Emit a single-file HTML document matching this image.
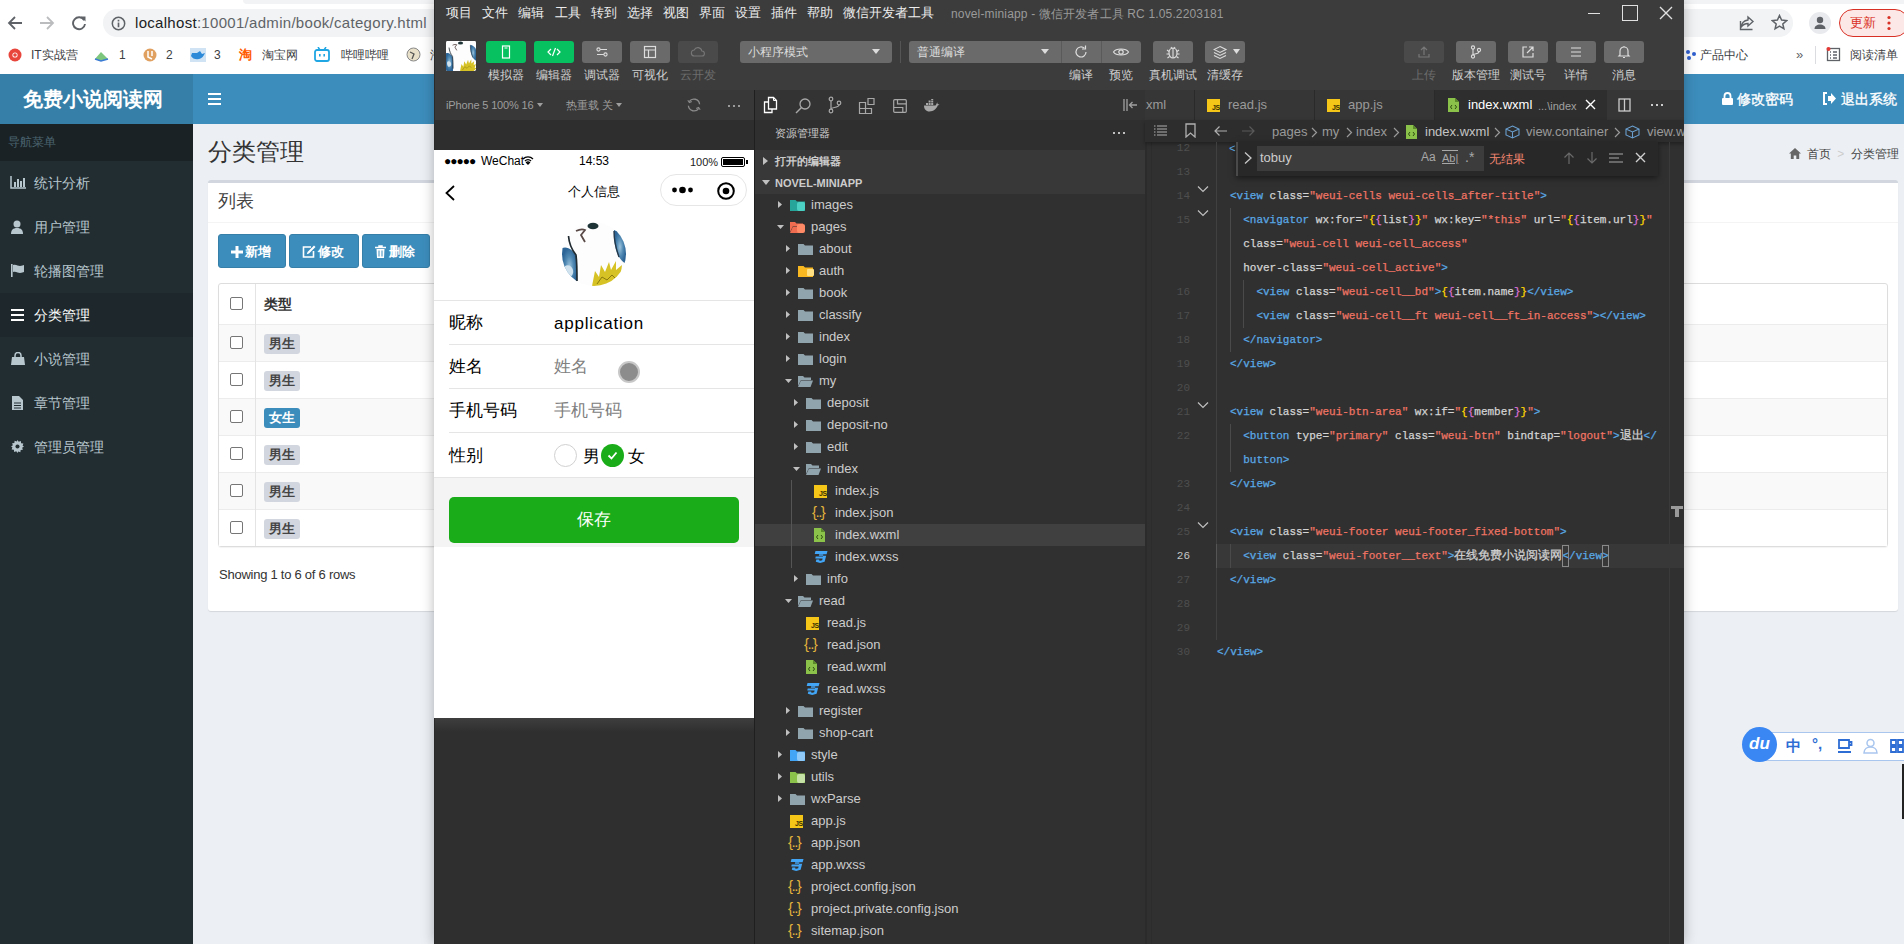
<!DOCTYPE html>
<html><head><meta charset="utf-8">
<style>
*{box-sizing:border-box;margin:0;padding:0}
html,body{width:1904px;height:944px;overflow:hidden;background:#ecf0f5;font-family:"Liberation Sans",sans-serif;position:relative}
.a{position:absolute;white-space:nowrap}
/* browser chrome */
#chrome{left:0;top:0;width:1904px;height:74px;background:#fff}
#hdr{left:0;top:74px;width:1904px;height:50px;background:#3c8dbc}
#logo{left:0;top:74px;width:193px;height:50px;background:#367fa9;color:#fff;font-weight:bold;font-size:20px;line-height:50px;padding-left:23px}
#side{left:0;top:124px;width:193px;height:820px;background:#222d32}
.mi{left:0;width:193px;height:44px;line-height:44px;color:#b8c7ce;font-size:14px;padding-left:34px}
.mi svg{position:absolute;left:10px;top:15px}
.box{background:#fff}
.btn{background:#3c8dbc;border:1px solid #367fa9;border-radius:3px;color:#fff;font-size:13px;height:34px;line-height:33px;text-align:center;font-weight:bold}
.cb{width:13px;height:13px;border:1px solid #767676;border-radius:2px;background:#fff}
.lbl{width:36px;height:20px;border-radius:3px;background:#d2d6de;color:#444;font-size:13px;font-weight:bold;line-height:20px;text-align:center}
/* devtools */
#dt{left:434px;top:0;width:1250px;height:944px;background:#3c3c3c;overflow:hidden;box-shadow:0 0 12px rgba(0,0,0,.28)}
.mm{top:4px;font-size:13px;color:#e8e8e8;line-height:18px}
.tb{top:41px;width:40px;height:22px;border-radius:3px;background:#6a6a6a}
.tl{top:67px;font-size:12px;color:#d6d6d6;line-height:16px;text-align:center}
.tr{height:22px;line-height:22px;font-size:13px;color:#cccccc}
.code{font-family:"Liberation Mono",monospace;font-size:11px;line-height:24px;color:#d4d4d4;-webkit-text-stroke:.25px}
.t{color:#5aa9e6}.s{color:#f07464}.y{color:#ffd700}.p{color:#da70d6}
</style></head><body>

<!-- ===== Browser chrome ===== -->
<div class="a" id="chrome"></div>
<div class="a" style="left:243px;top:0;width:1661px;height:4px;background:#f1f3f4;border-radius:0 0 0 4px"></div>
<div class="a" style="left:103px;top:9px;width:1690px;height:28px;border-radius:14px;background:#f1f3f4"></div>
<!-- nav icons -->
<svg class="a" style="left:7px;top:15px" width="16" height="16" viewBox="0 0 16 16"><path d="M15 8H2.5M8 2L2 8l6 6" stroke="#5f6368" stroke-width="1.8" fill="none"/></svg>
<svg class="a" style="left:39px;top:15px" width="16" height="16" viewBox="0 0 16 16"><path d="M1 8h12.5M8 2l6 6-6 6" stroke="#babcbe" stroke-width="1.8" fill="none"/></svg>
<svg class="a" style="left:71px;top:15px" width="16" height="16" viewBox="0 0 16 16"><path d="M13.2 5.2A6 6 0 1 0 14 9" stroke="#5f6368" stroke-width="1.9" fill="none"/><path d="M9.5 1.5h5v5z" fill="#5f6368"/></svg>
<svg class="a" style="left:111px;top:16px" width="15" height="15" viewBox="0 0 16 16"><circle cx="8" cy="8" r="6.6" stroke="#5f6368" stroke-width="1.6" fill="none"/><rect x="7.1" y="7" width="1.8" height="5" fill="#5f6368"/><rect x="7.1" y="4" width="1.8" height="1.8" fill="#5f6368"/></svg>
<div class="a" style="left:135px;top:13px;font-size:15px;line-height:20px;color:#5f6368;letter-spacing:.3px"><span style="color:#202124">localhost</span>:10001/admin/book/category.html</div>
<!-- bookmarks -->
<div class="a" style="left:0;top:45px;width:440px;height:20px;font-size:12px;line-height:20px;color:#3c4043">
 <svg class="a" style="left:8px;top:3px" width="14" height="14" viewBox="0 0 14 14"><circle cx="7" cy="7" r="6.5" fill="#e8453c"/><circle cx="7" cy="7" r="2.6" fill="#fff"/><circle cx="7" cy="7" r="1.8" fill="#e8453c"/></svg>
 <span class="a" style="left:31px">IT实战营</span>
 <svg class="a" style="left:94px;top:4px" width="15" height="13" viewBox="0 0 15 13"><path d="M1 10l6-7 7 7-7 2z" fill="#5cb85c" opacity=".8"/><path d="M1 10l6 2 7-2" stroke="#3b7bd4" stroke-width="1.6" fill="none"/></svg>
 <span class="a" style="left:119px">1</span>
 <svg class="a" style="left:143px;top:3px" width="14" height="14" viewBox="0 0 14 14"><circle cx="7" cy="7" r="6.5" fill="#e0a060"/><path d="M5 3v6l4 2M9 3v5" stroke="#fff" stroke-width="1.5" fill="none"/></svg>
 <span class="a" style="left:166px">2</span>
 <svg class="a" style="left:190px;top:3px" width="16" height="14" viewBox="0 0 16 14"><rect width="16" height="14" fill="#cfe3f5"/><path d="M1 8c2 4 10 5 13-1l1-2-3 1-2-3-3 2H2z" fill="#2d8ad8"/></svg>
 <span class="a" style="left:214px">3</span>
 <span class="a" style="left:239px;color:#ff5b00;font-weight:bold;font-size:13px">淘</span>
 <span class="a" style="left:262px">淘宝网</span>
 <svg class="a" style="left:314px;top:2px" width="16" height="15" viewBox="0 0 16 15"><rect x="1" y="3" width="14" height="11" rx="2" stroke="#20a6e3" stroke-width="1.8" fill="none"/><path d="M4 0l2 3M12 0l-2 3" stroke="#20a6e3" stroke-width="1.5"/><rect x="5" y="7" width="1.6" height="2.5" fill="#20a6e3"/><rect x="9.4" y="7" width="1.6" height="2.5" fill="#20a6e3"/></svg>
 <span class="a" style="left:341px">哔哩哔哩</span>
 <svg class="a" style="left:406px;top:2px" width="15" height="15" viewBox="0 0 15 15"><circle cx="7.5" cy="7.5" r="6.5" fill="#e8e0c8" stroke="#888" stroke-width="1"/><path d="M4 5l4 2-2 5" stroke="#555" stroke-width="1.3" fill="none"/></svg>
 <span class="a" style="left:430px">淘</span>
</div>
<!-- right side chrome -->
<svg class="a" style="left:1739px;top:15px" width="16" height="16" viewBox="0 0 16 16"><path d="M9 2l5 4.5L9 11V8.5C5.5 8.5 3.5 10 2 12.5 2.5 8.5 5 5.5 9 5z" stroke="#5f6368" stroke-width="1.4" fill="none"/><path d="M1.5 6v8.5h12" stroke="#5f6368" stroke-width="1.4" fill="none"/></svg>
<svg class="a" style="left:1771px;top:14px" width="17" height="17" viewBox="0 0 17 17"><path d="M8.5 1.5l2.1 4.6 5 .5-3.8 3.3 1.1 4.9-4.4-2.6-4.4 2.6 1.1-4.9L1.4 6.6l5-.5z" stroke="#5f6368" stroke-width="1.5" fill="none"/></svg>
<div class="a" style="left:1809px;top:12px;width:22px;height:22px;border-radius:11px;background:#e8eaed"></div>
<svg class="a" style="left:1812px;top:15px" width="16" height="16" viewBox="0 0 16 16"><circle cx="8" cy="5" r="3.2" fill="#5f6368"/><path d="M2.5 14c0-3 2.5-4.5 5.5-4.5s5.5 1.5 5.5 4.5z" fill="#5f6368"/></svg>
<div class="a" style="left:1839px;top:9px;width:70px;height:28px;border-radius:14px;border:1px solid #d93025;background:#fce8e6"></div>
<div class="a" style="left:1850px;top:14px;font-size:13px;line-height:18px;color:#d93025">更新</div>
<svg class="a" style="left:1887px;top:15px" width="4" height="16" viewBox="0 0 4 16"><circle cx="2" cy="2.5" r="1.6" fill="#d93025"/><circle cx="2" cy="8" r="1.6" fill="#d93025"/><circle cx="2" cy="13.5" r="1.6" fill="#d93025"/></svg>
<svg class="a" style="left:1684px;top:48px" width="14" height="14" viewBox="0 0 14 14"><circle cx="4" cy="4" r="2" fill="#3060d0"/><circle cx="10" cy="6" r="2" fill="#3060d0"/><circle cx="5" cy="10" r="2" fill="#3060d0"/></svg>
<div class="a" style="left:1700px;top:45px;font-size:12px;line-height:20px;color:#3c4043">产品中心</div>
<div class="a" style="left:1796px;top:45px;font-size:13px;line-height:20px;color:#5f6368">»</div>
<div class="a" style="left:1815px;top:46px;width:1px;height:18px;background:#dadce0"></div>
<svg class="a" style="left:1826px;top:47px" width="15" height="15" viewBox="0 0 15 15"><rect x="1.5" y="1.5" width="12" height="12" stroke="#5f6368" stroke-width="1.3" fill="none"/><path d="M4 5h1M4 8h1M4 11h1M7 5h4M7 8h4M7 11h4" stroke="#5f6368" stroke-width="1.3"/><circle cx="2.5" cy="2" r="2" fill="#e53935"/></svg>
<div class="a" style="left:1850px;top:45px;font-size:12px;line-height:20px;color:#3c4043">阅读清单</div>

<!-- ===== Admin page ===== -->
<div class="a" id="hdr"></div>
<div class="a" id="logo">免费小说阅读网</div>
<svg class="a" style="left:208px;top:93px" width="13" height="12" viewBox="0 0 13 12"><rect y="0" width="13" height="2" fill="#fff"/><rect y="5" width="13" height="2" fill="#fff"/><rect y="10" width="13" height="2" fill="#fff"/></svg>
<div class="a" id="side"></div>
<div class="a" style="left:0;top:124px;width:193px;height:37px;background:#1a2226;color:#4b646f;font-size:12px;line-height:37px;padding-left:8px">导航菜单</div>
<div class="a mi" style="top:161px">统计分析<svg width="16" height="13" viewBox="0 0 16 13" style="top:15px"><path d="M1 0v12h15" stroke="#b8c7ce" stroke-width="1.5" fill="none"/><rect x="4" y="6" width="2" height="5" fill="#b8c7ce"/><rect x="7" y="3" width="2" height="8" fill="#b8c7ce"/><rect x="10" y="5" width="2" height="6" fill="#b8c7ce"/><rect x="13" y="2" width="2" height="9" fill="#b8c7ce"/></svg></div>
<div class="a mi" style="top:205px">用户管理<svg width="12" height="14" viewBox="0 0 12 14" style="left:11px"><circle cx="6" cy="4" r="3.5" fill="#b8c7ce"/><path d="M0 14c0-4 2-6 6-6s6 2 6 6z" fill="#b8c7ce"/></svg></div>
<div class="a mi" style="top:249px">轮播图管理<svg width="14" height="13" viewBox="0 0 14 13" style="left:11px"><rect x="0" y="0" width="1.6" height="13" fill="#b8c7ce"/><path d="M2 1c3-1 5 1 7 1s3-1 4-1v7c-1 0-2 1-4 1S5 7 2 8z" fill="#b8c7ce"/></svg></div>
<div class="a mi" style="top:293px;background:#1e282c;color:#fff;border-left:0">分类管理<svg width="13" height="12" viewBox="0 0 13 12" style="top:16px;left:11px"><rect y="0" width="13" height="2" fill="#fff"/><rect y="5" width="13" height="2" fill="#fff"/><rect y="10" width="13" height="2" fill="#fff"/></svg></div>
<div class="a mi" style="top:337px">小说管理<svg width="14" height="13" viewBox="0 0 14 13" style="left:11px"><path d="M4 5V3.5a3 3 0 0 1 6 0V5" stroke="#b8c7ce" stroke-width="1.5" fill="none"/><path d="M1 5h12l1 8H0z" fill="#b8c7ce"/></svg></div>
<div class="a mi" style="top:381px">章节管理<svg width="11" height="14" viewBox="0 0 11 14" style="left:12px"><path d="M0 0h7l4 4v10H0z" fill="#b8c7ce"/><path d="M2 7h7M2 9.5h7M2 12h7" stroke="#222d32" stroke-width="1"/></svg></div>
<div class="a mi" style="top:425px">管理员管理<svg width="13" height="13" viewBox="0 0 14 14" style="left:11px"><path d="M7 0l1.3 2 2.3-.8.3 2.4 2.4.3-.8 2.3L14 7l-2 1.3.8 2.3-2.4.3-.3 2.4-2.3-.8L7 14l-1.3-2-2.3.8-.3-2.4-2.4-.3.8-2.3L0 7l2-1.3-.8-2.3 2.4-.3.3-2.4 2.3.8z" fill="#b8c7ce"/><circle cx="7" cy="7" r="2.2" fill="#222d32"/></svg></div>

<div class="a" style="left:208px;top:137px;font-size:24px;line-height:30px;color:#333">分类管理</div>
<!-- breadcrumb -->
<svg class="a" style="left:1789px;top:148px" width="12" height="11" viewBox="0 0 12 11"><path d="M6 0l6 5.5h-1.8V11H7.3V7.5H4.7V11H1.8V5.5H0z" fill="#666"/></svg>
<div class="a" style="left:1807px;top:146px;font-size:12px;line-height:16px;color:#444">首页 <span style="color:#ccc;padding:0 3px">&gt;</span> 分类管理</div>
<div class="a" style="left:1722px;top:91px;font-size:13.5px;line-height:18px;color:#fff;-webkit-text-stroke:.35px #fff">
 <svg style="vertical-align:-1px;margin-right:4px" width="11" height="13" viewBox="0 0 11 13"><path d="M2.5 6V4a3 3 0 0 1 6 0v2" stroke="#fff" stroke-width="1.8" fill="none"/><rect x="0" y="6" width="11" height="7" rx="1" fill="#fff"/></svg>修改密码
</div>
<div class="a" style="left:1822px;top:91px;font-size:13.5px;line-height:18px;color:#fff;-webkit-text-stroke:.35px #fff">
 <svg style="vertical-align:-1px;margin-right:5px" width="14" height="13" viewBox="0 0 14 13"><path d="M5 1H2v11h3" stroke="#fff" stroke-width="2" fill="none"/><path d="M6 4h3V1l5 5.5-5 5.5V9H6z" fill="#fff"/></svg>退出系统
</div>

<!-- box -->
<div class="a box" style="left:208px;top:180px;width:1690px;height:431px;border-top:3px solid #d2d6de;border-radius:3px;box-shadow:0 1px 1px rgba(0,0,0,.1)"></div>
<div class="a" style="left:208px;top:222px;width:1690px;height:1px;background:#f4f4f4"></div>
<div class="a" style="left:218px;top:190px;font-size:18px;line-height:22px;color:#444">列表</div>
<div class="a btn" style="left:218px;top:234px;width:68px;padding-left:12px">新增<svg class="a" style="left:12px;top:11px" width="12" height="12" viewBox="0 0 12 12"><path d="M6 0v12M0 6h12" stroke="#fff" stroke-width="3"/></svg></div>
<div class="a btn" style="left:289px;top:234px;width:70px;padding-left:14px">修改<svg class="a" style="left:12px;top:10px" width="14" height="13" viewBox="0 0 14 13"><path d="M9 2H1.5v10h10V6" stroke="#fff" stroke-width="1.6" fill="none"/><path d="M12 0.5l1.5 1.5-6.5 6.5-2.2.7.7-2.2z" fill="#fff"/></svg></div>
<div class="a btn" style="left:362px;top:234px;width:68px;padding-left:12px">删除<svg class="a" style="left:12px;top:10px" width="11" height="13" viewBox="0 0 11 13"><path d="M0 2.5h11M4 2.5V1h3v1.5" stroke="#fff" stroke-width="1.5" fill="none"/><path d="M1.5 4h8l-.5 9H2z" fill="#fff"/><path d="M4 5.5v6M7 5.5v6" stroke="#3c8dbc" stroke-width="1"/></svg></div>
<!-- table -->
<div class="a" style="left:218px;top:283px;width:1670px;height:264px;border:1px solid #ddd;border-radius:3px;box-shadow:0 1px 1px rgba(0,0,0,.05)"></div>
<div class="a" style="left:219px;top:324px;width:1668px;height:37px;background:#f9f9f9;border-top:1px solid #ececec"></div>
<div class="a cb" style="left:230px;top:336px"></div>
<div class="a lbl" style="left:264px;top:334px;">男生</div>
<div class="a" style="left:219px;top:361px;width:1668px;height:37px;background:#fff;border-top:1px solid #ececec"></div>
<div class="a cb" style="left:230px;top:373px"></div>
<div class="a lbl" style="left:264px;top:371px;">男生</div>
<div class="a" style="left:219px;top:398px;width:1668px;height:37px;background:#f9f9f9;border-top:1px solid #ececec"></div>
<div class="a cb" style="left:230px;top:410px"></div>
<div class="a lbl" style="left:264px;top:408px;background:#3c8dbc;color:#fff">女生</div>
<div class="a" style="left:219px;top:435px;width:1668px;height:37px;background:#fff;border-top:1px solid #ececec"></div>
<div class="a cb" style="left:230px;top:447px"></div>
<div class="a lbl" style="left:264px;top:445px;">男生</div>
<div class="a" style="left:219px;top:472px;width:1668px;height:37px;background:#f9f9f9;border-top:1px solid #ececec"></div>
<div class="a cb" style="left:230px;top:484px"></div>
<div class="a lbl" style="left:264px;top:482px;">男生</div>
<div class="a" style="left:219px;top:509px;width:1668px;height:37px;background:#fff;border-top:1px solid #ececec"></div>
<div class="a cb" style="left:230px;top:521px"></div>
<div class="a lbl" style="left:264px;top:519px;">男生</div>
<div class="a cb" style="left:230px;top:297px"></div>
<div class="a" style="left:264px;top:295px;font-size:14px;line-height:18px;font-weight:bold;color:#333">类型</div>
<div class="a" style="left:255px;top:284px;width:1px;height:262px;background:#e4e4e4"></div>
<div class="a" style="left:219px;top:567px;font-size:13px;line-height:16px;color:#333;letter-spacing:-.25px">Showing 1 to 6 of 6 rows</div>

<!-- IME -->
<div class="a" style="left:1760px;top:732px;width:150px;height:29px;background:#fff;border:1px solid #a9c6ee;border-radius:3px"></div>
<div class="a" style="left:1742px;top:727px;width:35px;height:35px;border-radius:50%;background:#3a86f2;color:#fff;font-size:17px;line-height:34px;text-align:center;font-style:italic;font-weight:bold">du</div>
<div class="a" style="left:1786px;top:736px;font-size:15px;line-height:20px;color:#2e6ed4;font-weight:bold">中</div>
<div class="a" style="left:1812px;top:734px;font-size:15px;line-height:20px;color:#2e6ed4;font-weight:bold">°,</div>
<svg class="a" style="left:1837px;top:738px" width="16" height="16" viewBox="0 0 16 16"><path d="M2 2h10v8H2zM12 4h2.5v3H12M1 14h13" stroke="#2e6ed4" stroke-width="1.8" fill="none"/></svg>
<svg class="a" style="left:1863px;top:738px" width="15" height="16" viewBox="0 0 15 16"><circle cx="7.5" cy="5" r="3.5" stroke="#a9c6ee" stroke-width="1.5" fill="none"/><path d="M1 15c0-4 3-6 6.5-6s6.5 2 6.5 6z" stroke="#a9c6ee" stroke-width="1.5" fill="none"/></svg>
<svg class="a" style="left:1890px;top:739px" width="14" height="15" viewBox="0 0 14 15"><path d="M1 1h5v5H1zM8 1h5v5H8zM1 8h5v5H1zM8 8h5v5H8z" stroke="#2e6ed4" stroke-width="1.8" fill="none"/></svg>
<div class="a" style="left:1902px;top:764px;width:2px;height:55px;background:#222"></div>

<!-- ===== DevTools window ===== -->
<div class="a" id="dt">
<div class="a" style="left:12px;top:4px;font-size:13px;line-height:18px;color:#ececec">项目</div>
<div class="a" style="left:48px;top:4px;font-size:13px;line-height:18px;color:#ececec">文件</div>
<div class="a" style="left:84px;top:4px;font-size:13px;line-height:18px;color:#ececec">编辑</div>
<div class="a" style="left:121px;top:4px;font-size:13px;line-height:18px;color:#ececec">工具</div>
<div class="a" style="left:157px;top:4px;font-size:13px;line-height:18px;color:#ececec">转到</div>
<div class="a" style="left:193px;top:4px;font-size:13px;line-height:18px;color:#ececec">选择</div>
<div class="a" style="left:229px;top:4px;font-size:13px;line-height:18px;color:#ececec">视图</div>
<div class="a" style="left:265px;top:4px;font-size:13px;line-height:18px;color:#ececec">界面</div>
<div class="a" style="left:301px;top:4px;font-size:13px;line-height:18px;color:#ececec">设置</div>
<div class="a" style="left:337px;top:4px;font-size:13px;line-height:18px;color:#ececec">插件</div>
<div class="a" style="left:373px;top:4px;font-size:13px;line-height:18px;color:#ececec">帮助</div>
<div class="a" style="left:409px;top:4px;font-size:13px;line-height:18px;color:#ececec">微信开发者工具</div>
<div class="a" style="left:517px;top:5px;font-size:12px;line-height:18px;color:#9a9a9a;letter-spacing:.15px">novel-miniapp - 微信开发者工具 RC 1.05.2203181</div>
<div class="a" style="left:1154px;top:13px;width:12px;height:1px;background:#e0e0e0"></div>
<div class="a" style="left:1188px;top:5px;width:16px;height:16px;border:1.5px solid #e0e0e0"></div>
<svg class="a" style="left:1225px;top:6px;" width="14" height="14" viewBox="0 0 14 14"><path d="M1 1l12 12M13 1L1 13" stroke="#e0e0e0" stroke-width="1.4"/></svg>
<svg class="a" style="left:12px;top:41px;" width="30" height="30" viewBox="0 0 64 64"><defs><clipPath id="avc1"><rect width="64" height="64" rx="3"/></clipPath><radialGradient id="avg1" cx=".5" cy=".5" r=".5"><stop offset="0" stop-color="#9cc3dc"/><stop offset=".55" stop-color="#4f88b2"/><stop offset="1" stop-color="#2c6596"/></radialGradient></defs><g clip-path="url(#avc1)"><rect width="64" height="64" fill="#fdfdfd"/><path d="M0 26c6-2 11 2 14 8 1 6 1 14 1 30H0z" fill="url(#avg1)"/><path d="M3 44c3-2 7 0 8 4s-2 8-5 7-5-7-3-11z" fill="#cfe2ee"/><path d="M52 8c6 2 11 6 12 10v24c-3-2-5-4-7-7-4-7-5-15-5-27z" fill="url(#avg1)"/><path d="M6.5 14C7 21 10 28 14 33c1 8 1 18 1 26" stroke="#1f2a30" stroke-width="1.7" fill="none"/><path d="M52 9c0 8 1 15 5 26" stroke="#24384a" stroke-width="1.4" fill="none"/><path d="M14 9c4-2 7-2 9-1l-4 5 4 7" stroke="#5a4a48" stroke-width="1.8" fill="none"/><ellipse cx="31" cy="4" rx="5.5" ry="3.2" fill="#1d3336"/><path d="M30 64l3-15 4 6 2-12 4 7 4-10 2 8 5-9v9l6-5-1 8 5-2-3 8 4 1-6 6z" fill="#d6c224"/><path d="M35 62l5-7 5 3 5-5 4 4" stroke="#8a7a10" stroke-width="1" fill="none"/></g></svg>
<div class="a" style="left:52px;top:41px;width:40px;height:22px;border-radius:3px;background:#07c160"></div>
<svg class="a" style="left:64px;top:44px;" width="16" height="16" viewBox="0 0 16 16"><rect x="4.5" y="2" width="7" height="12" stroke="#fff" stroke-width="1.2" fill="none"/><path d="M6.5 4h3" stroke="#fff" stroke-width="1"/></svg>
<div class="a" style="left:42px;top:67px;width:60px;height:16px;font-size:12px;line-height:16px;color:#d0d0d0;text-align:center">模拟器</div>
<div class="a" style="left:100px;top:41px;width:40px;height:22px;border-radius:3px;background:#07c160"></div>
<svg class="a" style="left:112px;top:44px;" width="16" height="16" viewBox="0 0 16 16"><path d="M5 5L2 8l3 3M11 5l3 3-3 3M9.5 4l-3 8" stroke="#fff" stroke-width="1.2" fill="none"/></svg>
<div class="a" style="left:90px;top:67px;width:60px;height:16px;font-size:12px;line-height:16px;color:#d0d0d0;text-align:center">编辑器</div>
<div class="a" style="left:148px;top:41px;width:40px;height:22px;border-radius:3px;background:#6a6a6a"></div>
<svg class="a" style="left:160px;top:44px;" width="16" height="16" viewBox="0 0 16 16"><path d="M6 5.5h7M3 10.5h7" stroke="#ddd" stroke-width="1.2"/><circle cx="4.5" cy="5.5" r="1.6" stroke="#ddd" stroke-width="1.1" fill="#6a6a6a"/><circle cx="11.5" cy="10.5" r="1.6" stroke="#ddd" stroke-width="1.1" fill="#6a6a6a"/></svg>
<div class="a" style="left:138px;top:67px;width:60px;height:16px;font-size:12px;line-height:16px;color:#d0d0d0;text-align:center">调试器</div>
<div class="a" style="left:196px;top:41px;width:40px;height:22px;border-radius:3px;background:#6a6a6a"></div>
<svg class="a" style="left:208px;top:44px;" width="16" height="16" viewBox="0 0 16 16"><rect x="2.5" y="2.5" width="11" height="11" stroke="#ddd" stroke-width="1.2" fill="none"/><path d="M2.5 6h11M6.5 6v7.5" stroke="#ddd" stroke-width="1.2"/></svg>
<div class="a" style="left:186px;top:67px;width:60px;height:16px;font-size:12px;line-height:16px;color:#d0d0d0;text-align:center">可视化</div>
<div class="a" style="left:244px;top:41px;width:40px;height:22px;border-radius:3px;background:#4a4a4a"></div>
<svg class="a" style="left:256px;top:44px;" width="16" height="16" viewBox="0 0 16 16"><path d="M4.5 12a3 3 0 0 1-.3-6 4 4 0 0 1 7.6 1 2.5 2.5 0 0 1 .2 5z" stroke="#777" stroke-width="1.1" fill="none"/></svg>
<div class="a" style="left:234px;top:67px;width:60px;height:16px;font-size:12px;line-height:16px;color:#6c6c6c;text-align:center">云开发</div>
<div class="a" style="left:306px;top:41px;width:152px;height:22px;border-radius:3px;background:#6a6a6a"></div>
<div class="a" style="left:314px;top:44px;font-size:12px;line-height:16px;color:#dcdcdc">小程序模式</div>
<svg class="a" style="left:438px;top:49px;" width="8" height="5" viewBox="0 0 8 5"><path d="M0 0h8L4 5z" fill="#dcdcdc"/></svg>
<div class="a" style="left:466px;top:41px;width:1px;height:22px;background:#555"></div>
<div class="a" style="left:475px;top:41px;width:232px;height:22px;border-radius:3px;background:#6a6a6a"></div>
<div class="a" style="left:627px;top:41px;width:1px;height:22px;background:#5a5a5a"></div>
<div class="a" style="left:667px;top:41px;width:1px;height:22px;background:#5a5a5a"></div>
<div class="a" style="left:483px;top:44px;font-size:12px;line-height:16px;color:#dcdcdc">普通编译</div>
<svg class="a" style="left:607px;top:49px;" width="8" height="5" viewBox="0 0 8 5"><path d="M0 0h8L4 5z" fill="#dcdcdc"/></svg>
<svg class="a" style="left:639px;top:44px;" width="16" height="16" viewBox="0 0 16 16"><path d="M13 8a5 5 0 1 1-1.6-3.7" stroke="#ddd" stroke-width="1.2" fill="none"/><path d="M12.5 1.5v3.5H9" stroke="#ddd" stroke-width="1.2" fill="none"/></svg>
<svg class="a" style="left:678px;top:44px;" width="18" height="16" viewBox="0 0 18 16"><path d="M1.5 8C4 4 14 4 16.5 8 14 12 4 12 1.5 8z" stroke="#ddd" stroke-width="1.2" fill="none"/><circle cx="9" cy="8" r="2.2" stroke="#ddd" stroke-width="1.2" fill="none"/></svg>
<div class="a" style="left:627px;top:67px;width:40px;height:16px;font-size:12px;line-height:16px;color:#d0d0d0;text-align:center">编译</div>
<div class="a" style="left:667px;top:67px;width:40px;height:16px;font-size:12px;line-height:16px;color:#d0d0d0;text-align:center">预览</div>
<div class="a" style="left:719px;top:41px;width:40px;height:22px;border-radius:3px;background:#6a6a6a"></div>
<svg class="a" style="left:731px;top:44px;" width="16" height="16" viewBox="0 0 16 16"><ellipse cx="8" cy="9" rx="4" ry="5" stroke="#ddd" stroke-width="1.2" fill="none"/><path d="M8 4v10M2 6l2 1.5M14 6l-2 1.5M1.5 10h2.5M14.5 10H12M2.5 14l2-1.5M13.5 14l-2-1.5M6 3l1 1.5M10 3L9 4.5" stroke="#ddd" stroke-width="1.1"/></svg>
<div class="a" style="left:709px;top:67px;width:60px;height:16px;font-size:12px;line-height:16px;color:#d0d0d0;text-align:center">真机调试</div>
<div class="a" style="left:771px;top:41px;width:40px;height:22px;border-radius:3px;background:#6a6a6a"></div>
<div class="a" style="left:761px;top:67px;width:60px;height:16px;font-size:12px;line-height:16px;color:#d0d0d0;text-align:center">清缓存</div>
<svg class="a" style="left:779px;top:44px;" width="18" height="16" viewBox="0 0 18 16"><path d="M7 2.5l6 3-6 3-6-3z" stroke="#ddd" stroke-width="1.1" fill="none"/><path d="M1 8.5l6 3 6-3M1 11.5l6 3 6-3" stroke="#ddd" stroke-width="1.1" fill="none"/></svg>
<svg class="a" style="left:799px;top:49px;" width="7" height="5" viewBox="0 0 7 5"><path d="M0 0h7L3.5 5z" fill="#ddd"/></svg>
<div class="a" style="left:970px;top:41px;width:40px;height:22px;border-radius:3px;background:#4a4a4a"></div>
<svg class="a" style="left:982px;top:44px;" width="16" height="16" viewBox="0 0 16 16"><path d="M8 3v8M5 6l3-3 3 3M3 10v3h10v-3" stroke="#777" stroke-width="1.2" fill="none"/></svg>
<div class="a" style="left:960px;top:67px;width:60px;height:16px;font-size:12px;line-height:16px;color:#6c6c6c;text-align:center">上传</div>
<div class="a" style="left:1022px;top:41px;width:40px;height:22px;border-radius:3px;background:#6a6a6a"></div>
<svg class="a" style="left:1034px;top:44px;" width="16" height="16" viewBox="0 0 16 16"><circle cx="5" cy="3.5" r="1.6" stroke="#ddd" stroke-width="1.1" fill="none"/><circle cx="5" cy="12.5" r="1.6" stroke="#ddd" stroke-width="1.1" fill="none"/><circle cx="11" cy="6" r="1.6" stroke="#ddd" stroke-width="1.1" fill="none"/><path d="M5 5v6M11 7.6c0 3-6 2-6 3.3" stroke="#ddd" stroke-width="1.1" fill="none"/></svg>
<div class="a" style="left:1012px;top:67px;width:60px;height:16px;font-size:12px;line-height:16px;color:#d0d0d0;text-align:center">版本管理</div>
<div class="a" style="left:1074px;top:41px;width:40px;height:22px;border-radius:3px;background:#6a6a6a"></div>
<svg class="a" style="left:1086px;top:44px;" width="16" height="16" viewBox="0 0 16 16"><path d="M7 3H3v10h10V9M9 3h4v4M13 3L7 9" stroke="#ddd" stroke-width="1.2" fill="none"/></svg>
<div class="a" style="left:1064px;top:67px;width:60px;height:16px;font-size:12px;line-height:16px;color:#d0d0d0;text-align:center">测试号</div>
<div class="a" style="left:1122px;top:41px;width:40px;height:22px;border-radius:3px;background:#6a6a6a"></div>
<svg class="a" style="left:1134px;top:44px;" width="16" height="16" viewBox="0 0 16 16"><path d="M3 4h10M3 8h10M3 12h10" stroke="#ddd" stroke-width="1.2"/></svg>
<div class="a" style="left:1112px;top:67px;width:60px;height:16px;font-size:12px;line-height:16px;color:#d0d0d0;text-align:center">详情</div>
<div class="a" style="left:1170px;top:41px;width:40px;height:22px;border-radius:3px;background:#6a6a6a"></div>
<svg class="a" style="left:1182px;top:44px;" width="16" height="16" viewBox="0 0 16 16"><path d="M4 11V7a4 4 0 0 1 8 0v4l1 1H3zM7 13.5h2M8 2v1" stroke="#ddd" stroke-width="1.2" fill="none"/></svg>
<div class="a" style="left:1160px;top:67px;width:60px;height:16px;font-size:12px;line-height:16px;color:#d0d0d0;text-align:center">消息</div>
<div class="a" style="left:0px;top:90px;width:320px;height:30px;background:#383838"></div>
<div class="a" style="left:0px;top:120px;width:320px;height:30px;background:#2e2e2e"></div>
<div class="a" style="left:0px;top:718px;width:320px;height:226px;background:#2f2f2f"></div>
<div class="a" style="left:0px;top:718px;width:320px;height:14px;background:linear-gradient(#3e3e3e,#2f2f2f)"></div>
<div class="a" style="left:12px;top:97px;font-size:11px;line-height:16px;color:#9e9e9e;letter-spacing:-.15px">iPhone 5 100% 16</div>
<svg class="a" style="left:103px;top:103px;" width="6" height="4" viewBox="0 0 6 4"><path d="M0 0h6L3 4z" fill="#9e9e9e"/></svg>
<div class="a" style="left:132px;top:97px;font-size:11px;line-height:16px;color:#9e9e9e">热重载 关</div>
<svg class="a" style="left:182px;top:103px;" width="6" height="4" viewBox="0 0 6 4"><path d="M0 0h6L3 4z" fill="#9e9e9e"/></svg>
<svg class="a" style="left:252px;top:97px;" width="16" height="16" viewBox="0 0 16 16"><path d="M13.6 7.2A5.7 5.7 0 0 0 3.2 4.6" stroke="#8a8a8a" stroke-width="1.3" fill="none"/><path d="M2.4 8.8A5.7 5.7 0 0 0 12.8 11.4" stroke="#8a8a8a" stroke-width="1.3" fill="none"/><path d="M1.8 3.2l1.6 2.4 2.4-1.2" stroke="#8a8a8a" stroke-width="1.1" fill="none"/><path d="M14.2 12.8l-1.6-2.4-2.4 1.2" stroke="#8a8a8a" stroke-width="1.1" fill="none"/></svg>
<div class="a" style="left:294px;top:105px;width:2px;height:2px;background:#9a9a9a"></div>
<div class="a" style="left:299px;top:105px;width:2px;height:2px;background:#9a9a9a"></div>
<div class="a" style="left:304px;top:105px;width:2px;height:2px;background:#9a9a9a"></div>
<div class="a" style="left:0px;top:150px;width:320px;height:568px;background:#fff"></div>
<div class="a" style="left:10px;top:154px;font-size:12px;line-height:14px;color:#000;letter-spacing:-1px">●●●●●</div>
<div class="a" style="left:47px;top:153px;font-size:12px;line-height:16px;color:#000">WeChat</div>
<svg class="a" style="left:88px;top:155px;" width="12" height="10" viewBox="0 0 12 10"><path d="M1 4a7 7 0 0 1 10 0M3 6a4 4 0 0 1 6 0M6 9l1.5-1.5a2 2 0 0 0-3 0z" stroke="#000" stroke-width="1.3" fill="none"/></svg>
<div class="a" style="left:145px;top:153px;font-size:12px;line-height:16px;color:#000">14:53</div>
<div class="a" style="left:256px;top:155px;font-size:11px;line-height:14px;color:#222">100%</div>
<div class="a" style="left:287px;top:157px;width:24px;height:10px;border:1.3px solid #000;border-radius:2px"></div>
<div class="a" style="left:289px;top:159px;width:20px;height:6px;background:#000"></div>
<div class="a" style="left:312px;top:160px;width:2px;height:4px;background:#000"></div>
<svg class="a" style="left:10px;top:185px;" width="12" height="16" viewBox="0 0 12 16"><path d="M10 1L2.5 8 10 15" stroke="#000" stroke-width="1.8" fill="none"/></svg>
<div class="a" style="left:134px;top:184px;font-size:13px;line-height:16px;color:#000">个人信息</div>
<div class="a" style="left:226px;top:174px;width:87px;height:32px;border:1px solid #e6e6e6;border-radius:16px;background:rgba(255,255,255,.6)"></div>
<svg class="a" style="left:237px;top:184px" width="24" height="12" viewBox="0 0 24 12"><circle cx="3.5" cy="6" r="2.4" fill="#000"/><circle cx="11.5" cy="6" r="3.3" fill="#000"/><circle cx="19.5" cy="6" r="2.4" fill="#000"/></svg>
<svg class="a" style="left:282px;top:181px;" width="20" height="20" viewBox="0 0 20 20"><circle cx="10" cy="10" r="7.8" stroke="#000" stroke-width="2" fill="none"/><circle cx="10" cy="10" r="3.3" fill="#000"/></svg>
<div class="a" style="left:269px;top:181px;width:1px;height:19px;background:#e6e6e6;display:none"></div>
<svg class="a" style="left:128px;top:222px;" width="64" height="64" viewBox="0 0 64 64"><defs><clipPath id="avc2"><circle cx="32" cy="32" r="32"/></clipPath><radialGradient id="avg2" cx=".5" cy=".5" r=".5"><stop offset="0" stop-color="#9cc3dc"/><stop offset=".55" stop-color="#4f88b2"/><stop offset="1" stop-color="#2c6596"/></radialGradient></defs><g clip-path="url(#avc2)"><rect width="64" height="64" fill="#fdfdfd"/><path d="M0 26c6-2 11 2 14 8 1 6 1 14 1 30H0z" fill="url(#avg2)"/><path d="M3 44c3-2 7 0 8 4s-2 8-5 7-5-7-3-11z" fill="#cfe2ee"/><path d="M52 8c6 2 11 6 12 10v24c-3-2-5-4-7-7-4-7-5-15-5-27z" fill="url(#avg2)"/><path d="M6.5 14C7 21 10 28 14 33c1 8 1 18 1 26" stroke="#1f2a30" stroke-width="1.7" fill="none"/><path d="M52 9c0 8 1 15 5 26" stroke="#24384a" stroke-width="1.4" fill="none"/><path d="M14 9c4-2 7-2 9-1l-4 5 4 7" stroke="#5a4a48" stroke-width="1.8" fill="none"/><ellipse cx="31" cy="4" rx="5.5" ry="3.2" fill="#1d3336"/><path d="M30 64l3-15 4 6 2-12 4 7 4-10 2 8 5-9v9l6-5-1 8 5-2-3 8 4 1-6 6z" fill="#d6c224"/><path d="M35 62l5-7 5 3 5-5 4 4" stroke="#8a7a10" stroke-width="1" fill="none"/></g></svg>
<div class="a" style="left:0px;top:300px;width:320px;height:1px;background:#e5e5e5"></div>
<div class="a" style="left:15px;top:312px;font-size:17px;line-height:22px;color:#000">昵称</div>
<div class="a" style="left:120px;top:313px;font-size:17px;line-height:22px;color:#000;letter-spacing:.8px">application</div>
<div class="a" style="left:15px;top:344px;width:305px;height:1px;background:#e5e5e5"></div>
<div class="a" style="left:15px;top:356px;font-size:17px;line-height:22px;color:#000">姓名</div>
<div class="a" style="left:120px;top:356px;font-size:17px;line-height:22px;color:#808080">姓名</div>
<div class="a" style="left:184px;top:361px;width:22px;height:22px;border-radius:50%;background:#8c8c8c;border:2px solid #c8c8c8"></div>
<div class="a" style="left:15px;top:388px;width:305px;height:1px;background:#e5e5e5"></div>
<div class="a" style="left:15px;top:400px;font-size:17px;line-height:22px;color:#000">手机号码</div>
<div class="a" style="left:120px;top:400px;font-size:17px;line-height:22px;color:#808080">手机号码</div>
<div class="a" style="left:15px;top:432px;width:305px;height:1px;background:#e5e5e5"></div>
<div class="a" style="left:15px;top:445px;font-size:17px;line-height:22px;color:#000">性别</div>
<div class="a" style="left:120px;top:444px;width:23px;height:23px;border-radius:50%;border:1px solid #d1d1d1;background:#fff"></div>
<div class="a" style="left:149px;top:446px;font-size:17px;line-height:22px;color:#000">男</div>
<div class="a" style="left:167px;top:444px;width:23px;height:23px;border-radius:50%;background:#1aad19"></div>
<svg class="a" style="left:171px;top:448px;" width="15" height="15" viewBox="0 0 15 15"><path d="M3.5 7.5l3 3 5-6" stroke="#fff" stroke-width="1.8" fill="none"/></svg>
<div class="a" style="left:194px;top:446px;font-size:17px;line-height:22px;color:#000">女</div>
<div class="a" style="left:0px;top:477px;width:320px;height:70px;background:#f4f4f4;border-top:1px solid #e5e5e5"></div>
<div class="a" style="left:15px;top:497px;width:290px;height:46px;border-radius:5px;background:#1aad19;color:#fff;font-size:17px;line-height:46px;text-align:center">保存</div>
<div class="a" style="left:320px;top:90px;width:1px;height:854px;background:#1f1f1f"></div>
<div class="a" style="left:321px;top:90px;width:390px;height:30px;background:#333333"></div>
<div class="a" style="left:321px;top:120px;width:390px;height:824px;background:#303030"></div>
<div class="a" style="left:321px;top:120px;width:390px;height:30px;background:#2f2f2f"></div>
<svg class="a" style="left:328px;top:96px;" width="18" height="18" viewBox="0 0 18 18"><path d="M6.5 1.5h5l3 3v8.5h-8z" stroke="#fff" stroke-width="1.3" fill="none"/><path d="M11.5 1.5v3h3" stroke="#fff" stroke-width="1" fill="none"/><path d="M6.5 6H2.5v10.5h7.5V13" stroke="#fff" stroke-width="1.3" fill="none"/></svg>
<svg class="a" style="left:360px;top:97px;" width="18" height="18" viewBox="0 0 18 18"><circle cx="11" cy="7" r="5" stroke="#a8a8a8" stroke-width="1.3" fill="none"/><path d="M7.5 10.5L2 16" stroke="#a8a8a8" stroke-width="1.4"/></svg>
<svg class="a" style="left:393px;top:96px;" width="18" height="18" viewBox="0 0 18 18"><circle cx="4" cy="3" r="1.8" stroke="#a8a8a8" stroke-width="1.2" fill="none"/><circle cx="4" cy="15" r="1.8" stroke="#a8a8a8" stroke-width="1.2" fill="none"/><circle cx="12" cy="7" r="1.8" stroke="#a8a8a8" stroke-width="1.2" fill="none"/><path d="M4 5v8M12 9c0 3-8 2-8 4" stroke="#a8a8a8" stroke-width="1.2" fill="none"/></svg>
<svg class="a" style="left:424px;top:97px;" width="18" height="18" viewBox="0 0 18 18"><path d="M1.5 5.5h6v6h-6zM1.5 11.5h6v5h-6zM7.5 11.5h6v5h-6zM10 1.5h6v6h-6z" stroke="#a8a8a8" stroke-width="1.2" fill="none"/></svg>
<svg class="a" style="left:459px;top:99px;" width="14" height="14" viewBox="0 0 14 14"><rect x=".7" y=".7" width="12.6" height="12.6" rx="1" stroke="#a8a8a8" stroke-width="1.2" fill="none"/><path d="M4.5 1v3.8H13M1 8.5h8.8V13" stroke="#a8a8a8" stroke-width="1.2" fill="none"/></svg>
<svg class="a" style="left:489px;top:99px;" width="17" height="13" viewBox="0 0 17 13"><path d="M1 6.5h11.5c.8-1 1.5-2.2 1.6-3.2l.6 1.6 1.8.9-1.8.8C13.6 10 10.5 12.5 6.5 12.5 3 12.5 1 10 1 6.5z" fill="#a8a8a8"/><path d="M3 4h2v2H3zM5.6 4h2v2h-2zM8.2 4h2v2h-2zM5.6 1.4h2v2h-2zM8.2 1.4h2v2h-2zM8.2 -1h2v2h-2z" fill="#a8a8a8"/></svg>
<svg class="a" style="left:688px;top:97px;" width="16" height="16" viewBox="0 0 16 16"><path d="M2 2v12M5 2v12" stroke="#a0a0a0" stroke-width="1.3"/><path d="M15 8H8M10.5 5L7.5 8l3 3" stroke="#a0a0a0" stroke-width="1.3" fill="none"/></svg>
<div class="a" style="left:341px;top:125px;font-size:11px;line-height:16px;color:#cccccc">资源管理器</div>
<div class="a" style="left:679px;top:132px;width:2px;height:2px;background:#c0c0c0"></div>
<div class="a" style="left:684px;top:132px;width:2px;height:2px;background:#c0c0c0"></div>
<div class="a" style="left:689px;top:132px;width:2px;height:2px;background:#c0c0c0"></div>
<div class="a" style="left:321px;top:150px;width:390px;height:22px;background:#383838"></div>
<div class="a" style="left:321px;top:172px;width:390px;height:22px;background:#383838"></div>
<svg class="a" style="left:329px;top:157px;" width="5" height="8" viewBox="0 0 5 8"><path d="M0 0l5 4-5 4z" fill="#c0c0c0"/></svg>
<div class="a" style="left:341px;top:153px;font-size:11px;line-height:16px;color:#cccccc;font-weight:bold">打开的编辑器</div>
<svg class="a" style="left:328px;top:180px;" width="8" height="5" viewBox="0 0 8 5"><path d="M0 0h8L4 5z" fill="#c0c0c0"/></svg>
<div class="a" style="left:341px;top:175px;font-size:11px;line-height:16px;color:#cccccc;font-weight:bold">NOVEL-MINIAPP</div>
<div class="a" style="left:321px;top:524px;width:390px;height:22px;background:#404040"></div>
<div class="a" style="left:357px;top:480px;width:1px;height:88px;background:#555"></div>
<svg class="a" style="left:344px;top:201px;" width="4" height="7" viewBox="0 0 4 7"><path d="M0 0l4 3.5L0 7z" fill="#c0c0c0"/></svg>
<svg class="a" style="left:356px;top:199px;" width="15" height="12" viewBox="0 0 15 12"><path d="M0 1h5.5l1.5 1.5H15V12H0z" fill="#26a69a"/></svg>
<div class="a" style="left:363px;top:202px;width:8px;height:9px;background:#4dd0c4;border-radius:2px"></div>
<div class="a" style="left:377px;top:194px;height:22px;font-size:13px;line-height:22px;color:#cccccc">images</div>
<svg class="a" style="left:343px;top:225px;" width="7" height="4" viewBox="0 0 7 4"><path d="M0 0h7L3.5 4z" fill="#c0c0c0"/></svg>
<svg class="a" style="left:356px;top:221px;" width="15" height="12" viewBox="0 0 15 12"><path d="M0 1h5l1.5 1.5H13V5H3L0 11z" fill="#ef6c50"/><path d="M3 5.5h12L12.5 12H0z" fill="#ef6c50"/></svg>
<div class="a" style="left:363px;top:224px;width:8px;height:9px;background:#ff8a65;border-radius:2px"></div>
<div class="a" style="left:377px;top:216px;height:22px;font-size:13px;line-height:22px;color:#cccccc">pages</div>
<svg class="a" style="left:352px;top:245px;" width="4" height="7" viewBox="0 0 4 7"><path d="M0 0l4 3.5L0 7z" fill="#c0c0c0"/></svg>
<svg class="a" style="left:364px;top:243px;" width="15" height="12" viewBox="0 0 15 12"><path d="M0 1h5.5l1.5 1.5H15V12H0z" fill="#90a4ae"/></svg>
<div class="a" style="left:385px;top:238px;height:22px;font-size:13px;line-height:22px;color:#cccccc">about</div>
<svg class="a" style="left:352px;top:267px;" width="4" height="7" viewBox="0 0 4 7"><path d="M0 0l4 3.5L0 7z" fill="#c0c0c0"/></svg>
<svg class="a" style="left:364px;top:265px;" width="15" height="12" viewBox="0 0 15 12"><path d="M0 1h5.5l1.5 1.5H15V12H0z" fill="#f9b820"/></svg>
<div class="a" style="left:373px;top:269px;width:7px;height:7px;background:#ffe082;border-radius:1px"></div>
<div class="a" style="left:385px;top:260px;height:22px;font-size:13px;line-height:22px;color:#cccccc">auth</div>
<svg class="a" style="left:352px;top:289px;" width="4" height="7" viewBox="0 0 4 7"><path d="M0 0l4 3.5L0 7z" fill="#c0c0c0"/></svg>
<svg class="a" style="left:364px;top:287px;" width="15" height="12" viewBox="0 0 15 12"><path d="M0 1h5.5l1.5 1.5H15V12H0z" fill="#90a4ae"/></svg>
<div class="a" style="left:385px;top:282px;height:22px;font-size:13px;line-height:22px;color:#cccccc">book</div>
<svg class="a" style="left:352px;top:311px;" width="4" height="7" viewBox="0 0 4 7"><path d="M0 0l4 3.5L0 7z" fill="#c0c0c0"/></svg>
<svg class="a" style="left:364px;top:309px;" width="15" height="12" viewBox="0 0 15 12"><path d="M0 1h5.5l1.5 1.5H15V12H0z" fill="#90a4ae"/></svg>
<div class="a" style="left:385px;top:304px;height:22px;font-size:13px;line-height:22px;color:#cccccc">classify</div>
<svg class="a" style="left:352px;top:333px;" width="4" height="7" viewBox="0 0 4 7"><path d="M0 0l4 3.5L0 7z" fill="#c0c0c0"/></svg>
<svg class="a" style="left:364px;top:331px;" width="15" height="12" viewBox="0 0 15 12"><path d="M0 1h5.5l1.5 1.5H15V12H0z" fill="#90a4ae"/></svg>
<div class="a" style="left:385px;top:326px;height:22px;font-size:13px;line-height:22px;color:#cccccc">index</div>
<svg class="a" style="left:352px;top:355px;" width="4" height="7" viewBox="0 0 4 7"><path d="M0 0l4 3.5L0 7z" fill="#c0c0c0"/></svg>
<svg class="a" style="left:364px;top:353px;" width="15" height="12" viewBox="0 0 15 12"><path d="M0 1h5.5l1.5 1.5H15V12H0z" fill="#90a4ae"/></svg>
<div class="a" style="left:385px;top:348px;height:22px;font-size:13px;line-height:22px;color:#cccccc">login</div>
<svg class="a" style="left:351px;top:379px;" width="7" height="4" viewBox="0 0 7 4"><path d="M0 0h7L3.5 4z" fill="#c0c0c0"/></svg>
<svg class="a" style="left:364px;top:375px;" width="15" height="12" viewBox="0 0 15 12"><path d="M0 1h5l1.5 1.5H13V5H3L0 11z" fill="#90a4ae"/><path d="M3 5.5h12L12.5 12H0z" fill="#90a4ae"/></svg>
<div class="a" style="left:385px;top:370px;height:22px;font-size:13px;line-height:22px;color:#cccccc">my</div>
<svg class="a" style="left:360px;top:399px;" width="4" height="7" viewBox="0 0 4 7"><path d="M0 0l4 3.5L0 7z" fill="#c0c0c0"/></svg>
<svg class="a" style="left:372px;top:397px;" width="15" height="12" viewBox="0 0 15 12"><path d="M0 1h5.5l1.5 1.5H15V12H0z" fill="#90a4ae"/></svg>
<div class="a" style="left:393px;top:392px;height:22px;font-size:13px;line-height:22px;color:#cccccc">deposit</div>
<svg class="a" style="left:360px;top:421px;" width="4" height="7" viewBox="0 0 4 7"><path d="M0 0l4 3.5L0 7z" fill="#c0c0c0"/></svg>
<svg class="a" style="left:372px;top:419px;" width="15" height="12" viewBox="0 0 15 12"><path d="M0 1h5.5l1.5 1.5H15V12H0z" fill="#90a4ae"/></svg>
<div class="a" style="left:393px;top:414px;height:22px;font-size:13px;line-height:22px;color:#cccccc">deposit-no</div>
<svg class="a" style="left:360px;top:443px;" width="4" height="7" viewBox="0 0 4 7"><path d="M0 0l4 3.5L0 7z" fill="#c0c0c0"/></svg>
<svg class="a" style="left:372px;top:441px;" width="15" height="12" viewBox="0 0 15 12"><path d="M0 1h5.5l1.5 1.5H15V12H0z" fill="#90a4ae"/></svg>
<div class="a" style="left:393px;top:436px;height:22px;font-size:13px;line-height:22px;color:#cccccc">edit</div>
<svg class="a" style="left:359px;top:467px;" width="7" height="4" viewBox="0 0 7 4"><path d="M0 0h7L3.5 4z" fill="#c0c0c0"/></svg>
<svg class="a" style="left:372px;top:463px;" width="15" height="12" viewBox="0 0 15 12"><path d="M0 1h5l1.5 1.5H13V5H3L0 11z" fill="#90a4ae"/><path d="M3 5.5h12L12.5 12H0z" fill="#90a4ae"/></svg>
<div class="a" style="left:393px;top:458px;height:22px;font-size:13px;line-height:22px;color:#cccccc">index</div>
<div class="a" style="left:380px;top:485px;width:13px;height:13px;background:#f5c518"></div>
<div class="a" style="left:385px;top:490px;font-size:7px;line-height:7px;color:#3a3000;font-weight:bold;letter-spacing:-.5px">JS</div>
<div class="a" style="left:401px;top:480px;height:22px;font-size:13px;line-height:22px;color:#cccccc">index.js</div>
<div class="a" style="left:378px;top:503px;font-size:15px;line-height:18px;color:#e2b33c;letter-spacing:-1.5px">{..}</div>
<div class="a" style="left:401px;top:502px;height:22px;font-size:13px;line-height:22px;color:#cccccc">index.json</div>
<svg class="a" style="left:380px;top:528px;" width="11" height="14" viewBox="0 0 11 14"><path d="M0 0h7l4 4v10H0z" fill="#8bc34a"/><path d="M7 0v4h4" fill="#5a8a2a"/><path d="M4 7L2.5 9 4 11M7 7l1.5 2L7 11" stroke="#2d4a10" stroke-width="1" fill="none"/></svg>
<div class="a" style="left:401px;top:524px;height:22px;font-size:13px;line-height:22px;color:#cccccc">index.wxml</div>
<svg class="a" style="left:380px;top:550px;" width="14" height="14" viewBox="0 0 14 14"><path d="M1.5 1h12l-.9 3.2H5.2l-.4 1.6h7.4l-1.6 6L6.2 13 1.8 11.8l.5-2.4h3l-.2 1 1.2.4 1.9-.5.4-1.9H1.3l.4-2H9L9.3 4H.7z" fill="#42a5f5"/></svg>
<div class="a" style="left:401px;top:546px;height:22px;font-size:13px;line-height:22px;color:#cccccc">index.wxss</div>
<svg class="a" style="left:360px;top:575px;" width="4" height="7" viewBox="0 0 4 7"><path d="M0 0l4 3.5L0 7z" fill="#c0c0c0"/></svg>
<svg class="a" style="left:372px;top:573px;" width="15" height="12" viewBox="0 0 15 12"><path d="M0 1h5.5l1.5 1.5H15V12H0z" fill="#90a4ae"/></svg>
<div class="a" style="left:393px;top:568px;height:22px;font-size:13px;line-height:22px;color:#cccccc">info</div>
<svg class="a" style="left:351px;top:599px;" width="7" height="4" viewBox="0 0 7 4"><path d="M0 0h7L3.5 4z" fill="#c0c0c0"/></svg>
<svg class="a" style="left:364px;top:595px;" width="15" height="12" viewBox="0 0 15 12"><path d="M0 1h5l1.5 1.5H13V5H3L0 11z" fill="#90a4ae"/><path d="M3 5.5h12L12.5 12H0z" fill="#90a4ae"/></svg>
<div class="a" style="left:385px;top:590px;height:22px;font-size:13px;line-height:22px;color:#cccccc">read</div>
<div class="a" style="left:372px;top:617px;width:13px;height:13px;background:#f5c518"></div>
<div class="a" style="left:377px;top:622px;font-size:7px;line-height:7px;color:#3a3000;font-weight:bold;letter-spacing:-.5px">JS</div>
<div class="a" style="left:393px;top:612px;height:22px;font-size:13px;line-height:22px;color:#cccccc">read.js</div>
<div class="a" style="left:370px;top:635px;font-size:15px;line-height:18px;color:#e2b33c;letter-spacing:-1.5px">{..}</div>
<div class="a" style="left:393px;top:634px;height:22px;font-size:13px;line-height:22px;color:#cccccc">read.json</div>
<svg class="a" style="left:372px;top:660px;" width="11" height="14" viewBox="0 0 11 14"><path d="M0 0h7l4 4v10H0z" fill="#8bc34a"/><path d="M7 0v4h4" fill="#5a8a2a"/><path d="M4 7L2.5 9 4 11M7 7l1.5 2L7 11" stroke="#2d4a10" stroke-width="1" fill="none"/></svg>
<div class="a" style="left:393px;top:656px;height:22px;font-size:13px;line-height:22px;color:#cccccc">read.wxml</div>
<svg class="a" style="left:372px;top:682px;" width="14" height="14" viewBox="0 0 14 14"><path d="M1.5 1h12l-.9 3.2H5.2l-.4 1.6h7.4l-1.6 6L6.2 13 1.8 11.8l.5-2.4h3l-.2 1 1.2.4 1.9-.5.4-1.9H1.3l.4-2H9L9.3 4H.7z" fill="#42a5f5"/></svg>
<div class="a" style="left:393px;top:678px;height:22px;font-size:13px;line-height:22px;color:#cccccc">read.wxss</div>
<svg class="a" style="left:352px;top:707px;" width="4" height="7" viewBox="0 0 4 7"><path d="M0 0l4 3.5L0 7z" fill="#c0c0c0"/></svg>
<svg class="a" style="left:364px;top:705px;" width="15" height="12" viewBox="0 0 15 12"><path d="M0 1h5.5l1.5 1.5H15V12H0z" fill="#90a4ae"/></svg>
<div class="a" style="left:385px;top:700px;height:22px;font-size:13px;line-height:22px;color:#cccccc">register</div>
<svg class="a" style="left:352px;top:729px;" width="4" height="7" viewBox="0 0 4 7"><path d="M0 0l4 3.5L0 7z" fill="#c0c0c0"/></svg>
<svg class="a" style="left:364px;top:727px;" width="15" height="12" viewBox="0 0 15 12"><path d="M0 1h5.5l1.5 1.5H15V12H0z" fill="#90a4ae"/></svg>
<div class="a" style="left:385px;top:722px;height:22px;font-size:13px;line-height:22px;color:#cccccc">shop-cart</div>
<svg class="a" style="left:344px;top:751px;" width="4" height="7" viewBox="0 0 4 7"><path d="M0 0l4 3.5L0 7z" fill="#c0c0c0"/></svg>
<svg class="a" style="left:356px;top:749px;" width="15" height="12" viewBox="0 0 15 12"><path d="M0 1h5.5l1.5 1.5H15V12H0z" fill="#42a5f5"/></svg>
<div class="a" style="left:363px;top:752px;width:8px;height:9px;background:#90caf9;border-radius:2px"></div>
<div class="a" style="left:377px;top:744px;height:22px;font-size:13px;line-height:22px;color:#cccccc">style</div>
<svg class="a" style="left:344px;top:773px;" width="4" height="7" viewBox="0 0 4 7"><path d="M0 0l4 3.5L0 7z" fill="#c0c0c0"/></svg>
<svg class="a" style="left:356px;top:771px;" width="15" height="12" viewBox="0 0 15 12"><path d="M0 1h5.5l1.5 1.5H15V12H0z" fill="#8bc34a"/></svg>
<div class="a" style="left:363px;top:774px;width:8px;height:9px;background:#c5e1a5;border-radius:2px"></div>
<div class="a" style="left:377px;top:766px;height:22px;font-size:13px;line-height:22px;color:#cccccc">utils</div>
<svg class="a" style="left:344px;top:795px;" width="4" height="7" viewBox="0 0 4 7"><path d="M0 0l4 3.5L0 7z" fill="#c0c0c0"/></svg>
<svg class="a" style="left:356px;top:793px;" width="15" height="12" viewBox="0 0 15 12"><path d="M0 1h5.5l1.5 1.5H15V12H0z" fill="#90a4ae"/></svg>
<div class="a" style="left:377px;top:788px;height:22px;font-size:13px;line-height:22px;color:#cccccc">wxParse</div>
<div class="a" style="left:356px;top:815px;width:13px;height:13px;background:#f5c518"></div>
<div class="a" style="left:361px;top:820px;font-size:7px;line-height:7px;color:#3a3000;font-weight:bold;letter-spacing:-.5px">JS</div>
<div class="a" style="left:377px;top:810px;height:22px;font-size:13px;line-height:22px;color:#cccccc">app.js</div>
<div class="a" style="left:354px;top:833px;font-size:15px;line-height:18px;color:#e2b33c;letter-spacing:-1.5px">{..}</div>
<div class="a" style="left:377px;top:832px;height:22px;font-size:13px;line-height:22px;color:#cccccc">app.json</div>
<svg class="a" style="left:356px;top:858px;" width="14" height="14" viewBox="0 0 14 14"><path d="M1.5 1h12l-.9 3.2H5.2l-.4 1.6h7.4l-1.6 6L6.2 13 1.8 11.8l.5-2.4h3l-.2 1 1.2.4 1.9-.5.4-1.9H1.3l.4-2H9L9.3 4H.7z" fill="#42a5f5"/></svg>
<div class="a" style="left:377px;top:854px;height:22px;font-size:13px;line-height:22px;color:#cccccc">app.wxss</div>
<div class="a" style="left:354px;top:877px;font-size:15px;line-height:18px;color:#e2b33c;letter-spacing:-1.5px">{..}</div>
<div class="a" style="left:377px;top:876px;height:22px;font-size:13px;line-height:22px;color:#cccccc">project.config.json</div>
<div class="a" style="left:354px;top:899px;font-size:15px;line-height:18px;color:#e2b33c;letter-spacing:-1.5px">{..}</div>
<div class="a" style="left:377px;top:898px;height:22px;font-size:13px;line-height:22px;color:#cccccc">project.private.config.json</div>
<div class="a" style="left:354px;top:921px;font-size:15px;line-height:18px;color:#e2b33c;letter-spacing:-1.5px">{..}</div>
<div class="a" style="left:377px;top:920px;height:22px;font-size:13px;line-height:22px;color:#cccccc">sitemap.json</div>
<div class="a" style="left:711px;top:90px;width:539px;height:30px;background:#363636"></div>
<div class="a" style="left:711px;top:120px;width:539px;height:824px;background:#303030"></div>
<div class="a" style="left:711px;top:142px;width:2px;height:802px;background:#2b2b2b"></div>
<div class="a" style="left:717px;top:142px;width:1px;height:802px;background:#2c2c2c"></div>
<div class="a" style="left:711px;top:90px;width:50px;height:30px;background:#363636;border-right:1px solid #2a2a2a"></div>
<div class="a" style="left:712px;top:97px;font-size:13px;line-height:16px;color:#9a9a9a">xml</div>
<div class="a" style="left:761px;top:90px;width:120px;height:30px;border-right:1px solid #2a2a2a"></div>
<div class="a" style="left:773px;top:99px;width:13px;height:13px;background:#f5c518"></div>
<div class="a" style="left:778px;top:104px;font-size:7px;line-height:7px;color:#3a3000;font-weight:bold;letter-spacing:-.5px">JS</div>
<div class="a" style="left:794px;top:97px;font-size:13px;line-height:16px;color:#9a9a9a">read.js</div>
<div class="a" style="left:881px;top:90px;width:120px;height:30px;border-right:1px solid #2a2a2a"></div>
<div class="a" style="left:893px;top:99px;width:13px;height:13px;background:#f5c518"></div>
<div class="a" style="left:898px;top:104px;font-size:7px;line-height:7px;color:#3a3000;font-weight:bold;letter-spacing:-.5px">JS</div>
<div class="a" style="left:914px;top:97px;font-size:13px;line-height:16px;color:#9a9a9a">app.js</div>
<div class="a" style="left:1001px;top:90px;width:172px;height:30px;background:#2e2e2e"></div>
<svg class="a" style="left:1014px;top:98px;" width="11" height="14" viewBox="0 0 11 14"><path d="M0 0h7l4 4v10H0z" fill="#8bc34a"/><path d="M7 0v4h4" fill="#5a8a2a"/><path d="M4 7L2.5 9 4 11M7 7l1.5 2L7 11" stroke="#2d4a10" stroke-width="1" fill="none"/></svg>
<div class="a" style="left:1034px;top:97px;font-size:13px;line-height:16px;color:#ffffff">index.wxml</div>
<div class="a" style="left:1104px;top:98px;font-size:11px;line-height:16px;color:#a0a0a0">...\index</div>
<svg class="a" style="left:1151px;top:99px;" width="11" height="11" viewBox="0 0 11 11"><path d="M1 1l9 9M10 1L1 10" stroke="#fff" stroke-width="1.4"/></svg>
<svg class="a" style="left:1184px;top:98px;" width="13" height="14" viewBox="0 0 13 14"><rect x="1" y="1" width="11" height="12" stroke="#ccc" stroke-width="1.3" fill="none"/><path d="M6.5 1v12" stroke="#ccc" stroke-width="1.3"/></svg>
<div class="a" style="left:1217px;top:104px;width:2px;height:2px;background:#ccc"></div>
<div class="a" style="left:1222px;top:104px;width:2px;height:2px;background:#ccc"></div>
<div class="a" style="left:1227px;top:104px;width:2px;height:2px;background:#ccc"></div>
<div class="a" style="left:711px;top:120px;width:539px;height:22px;background:#2d2d2d;box-shadow:0 2px 4px rgba(0,0,0,.35)"></div>
<svg class="a" style="left:719px;top:124px;" width="15" height="14" viewBox="0 0 15 14"><path d="M1 2h1.5M4 2h10M1 5h1.5M4 5h10M1 8h1.5M4 8h10M1 11h1.5M4 11h10" stroke="#b0b0b0" stroke-width="1.1"/></svg>
<svg class="a" style="left:751px;top:123px;" width="11" height="15" viewBox="0 0 11 15"><path d="M1 1h9v13L5.5 10 1 14z" stroke="#b0b0b0" stroke-width="1.3" fill="none"/></svg>
<svg class="a" style="left:779px;top:125px;" width="15" height="12" viewBox="0 0 15 12"><path d="M14 6H2M6.5 1.5L2 6l4.5 4.5" stroke="#b0b0b0" stroke-width="1.2" fill="none"/></svg>
<svg class="a" style="left:807px;top:125px;" width="15" height="12" viewBox="0 0 15 12"><path d="M1 6h12M8.5 1.5L13 6l-4.5 4.5" stroke="#5a5a5a" stroke-width="1.2" fill="none"/></svg>
<div class="a" style="left:838px;top:124px;font-size:13px;line-height:16px;color:#9a9a9a">pages</div>
<svg class="a" style="left:877px;top:127px;" width="7" height="11" viewBox="0 0 7 11"><path d="M1 1l4.5 4.5L1 10" stroke="#9a9a9a" stroke-width="1.2" fill="none"/></svg>
<div class="a" style="left:888px;top:124px;font-size:13px;line-height:16px;color:#9a9a9a">my</div>
<svg class="a" style="left:912px;top:127px;" width="7" height="11" viewBox="0 0 7 11"><path d="M1 1l4.5 4.5L1 10" stroke="#9a9a9a" stroke-width="1.2" fill="none"/></svg>
<div class="a" style="left:922px;top:124px;font-size:13px;line-height:16px;color:#9a9a9a">index</div>
<svg class="a" style="left:959px;top:127px;" width="7" height="11" viewBox="0 0 7 11"><path d="M1 1l4.5 4.5L1 10" stroke="#9a9a9a" stroke-width="1.2" fill="none"/></svg>
<svg class="a" style="left:972px;top:125px;" width="11" height="14" viewBox="0 0 11 14"><path d="M0 0h7l4 4v10H0z" fill="#8bc34a"/><path d="M7 0v4h4" fill="#5a8a2a"/><path d="M4 7L2.5 9 4 11M7 7l1.5 2L7 11" stroke="#2d4a10" stroke-width="1" fill="none"/></svg>
<div class="a" style="left:991px;top:124px;font-size:13px;line-height:16px;color:#c4c4c4">index.wxml</div>
<svg class="a" style="left:1060px;top:127px;" width="7" height="11" viewBox="0 0 7 11"><path d="M1 1l4.5 4.5L1 10" stroke="#9a9a9a" stroke-width="1.2" fill="none"/></svg>
<svg class="a" style="left:1071px;top:125px;" width="15" height="14" viewBox="0 0 15 14"><path d="M7.5 1L14 4v6l-6.5 3L1 10V4z M1 4l6.5 3L14 4M7.5 7v6" stroke="#6a9fd0" stroke-width="1.1" fill="none"/></svg>
<div class="a" style="left:1092px;top:124px;font-size:13px;line-height:16px;color:#9a9a9a">view.container</div>
<svg class="a" style="left:1180px;top:127px;" width="7" height="11" viewBox="0 0 7 11"><path d="M1 1l4.5 4.5L1 10" stroke="#9a9a9a" stroke-width="1.2" fill="none"/></svg>
<svg class="a" style="left:1191px;top:125px;" width="15" height="14" viewBox="0 0 15 14"><path d="M7.5 1L14 4v6l-6.5 3L1 10V4z M1 4l6.5 3L14 4M7.5 7v6" stroke="#6a9fd0" stroke-width="1.1" fill="none"/></svg>
<div class="a" style="left:1213px;top:124px;font-size:13px;line-height:16px;color:#9a9a9a">view.weui</div>
<div class="a" style="left:782px;top:142px;width:1px;height:498px;background:#404040"></div>
<div class="a" style="left:1235px;top:142px;width:1px;height:802px;background:#3a3a3a"></div>
<div class="a" style="left:711px;top:360px;width:6px;height:40px;background:#3a3a3a;display:none"></div>
<div class="a" style="left:782px;top:544px;width:468px;height:24px;background:#383838"></div>
<div class="a" style="left:782px;top:544px;width:1px;height:24px;background:#555"></div>
<div class="a" style="left:726px;top:136px;width:30px;height:24px;font-family:'Liberation Mono',monospace;font-size:11px;line-height:24px;color:#4e4e4e;text-align:right">12</div>
<div class="a code" style="left:796px;top:136px;height:24px;"></div>
<div class="a" style="left:726px;top:160px;width:30px;height:24px;font-family:'Liberation Mono',monospace;font-size:11px;line-height:24px;color:#4e4e4e;text-align:right">13</div>
<div class="a code" style="left:796px;top:160px;height:24px;"></div>
<div class="a" style="left:726px;top:184px;width:30px;height:24px;font-family:'Liberation Mono',monospace;font-size:11px;line-height:24px;color:#4e4e4e;text-align:right">14</div>
<div class="a code" style="left:796px;top:184px;height:24px;"><span class="t">&lt;view</span> class=<span class="s">"weui-cells weui-cells_after-title"</span><span class="t">&gt;</span></div>
<div class="a" style="left:726px;top:208px;width:30px;height:24px;font-family:'Liberation Mono',monospace;font-size:11px;line-height:24px;color:#4e4e4e;text-align:right">15</div>
<div class="a code" style="left:796px;top:208px;height:24px;">&nbsp;&nbsp;<span class="t">&lt;navigator</span> wx:for=<span class="s">"</span><span class="y">{</span><span class="p">{</span>list<span class="p">}</span><span class="y">}</span><span class="s">"</span> wx:key=<span class="s">"*this"</span> url=<span class="s">"</span><span class="y">{</span><span class="p">{</span>item.url<span class="p">}</span><span class="y">}</span><span class="s">"</span></div>
<div class="a code" style="left:796px;top:232px;height:24px;">&nbsp;&nbsp;class=<span class="s">"weui-cell weui-cell_access"</span></div>
<div class="a code" style="left:796px;top:256px;height:24px;">&nbsp;&nbsp;hover-class=<span class="s">"weui-cell_active"</span><span class="t">&gt;</span></div>
<div class="a" style="left:726px;top:280px;width:30px;height:24px;font-family:'Liberation Mono',monospace;font-size:11px;line-height:24px;color:#4e4e4e;text-align:right">16</div>
<div class="a code" style="left:796px;top:280px;height:24px;">&nbsp;&nbsp;&nbsp;&nbsp;<span class="t">&lt;view</span> class=<span class="s">"weui-cell__bd"</span><span class="t">&gt;</span><span class="y">{</span><span class="p">{</span>item.name<span class="p">}</span><span class="y">}</span><span class="t">&lt;/view&gt;</span></div>
<div class="a" style="left:726px;top:304px;width:30px;height:24px;font-family:'Liberation Mono',monospace;font-size:11px;line-height:24px;color:#4e4e4e;text-align:right">17</div>
<div class="a code" style="left:796px;top:304px;height:24px;">&nbsp;&nbsp;&nbsp;&nbsp;<span class="t">&lt;view</span> class=<span class="s">"weui-cell__ft weui-cell__ft_in-access"</span><span class="t">&gt;&lt;/view&gt;</span></div>
<div class="a" style="left:726px;top:328px;width:30px;height:24px;font-family:'Liberation Mono',monospace;font-size:11px;line-height:24px;color:#4e4e4e;text-align:right">18</div>
<div class="a code" style="left:796px;top:328px;height:24px;">&nbsp;&nbsp;<span class="t">&lt;/navigator&gt;</span></div>
<div class="a" style="left:726px;top:352px;width:30px;height:24px;font-family:'Liberation Mono',monospace;font-size:11px;line-height:24px;color:#4e4e4e;text-align:right">19</div>
<div class="a code" style="left:796px;top:352px;height:24px;"><span class="t">&lt;/view&gt;</span></div>
<div class="a" style="left:726px;top:376px;width:30px;height:24px;font-family:'Liberation Mono',monospace;font-size:11px;line-height:24px;color:#4e4e4e;text-align:right">20</div>
<div class="a code" style="left:796px;top:376px;height:24px;"></div>
<div class="a" style="left:726px;top:400px;width:30px;height:24px;font-family:'Liberation Mono',monospace;font-size:11px;line-height:24px;color:#4e4e4e;text-align:right">21</div>
<div class="a code" style="left:796px;top:400px;height:24px;"><span class="t">&lt;view</span> class=<span class="s">"weui-btn-area"</span> wx:if=<span class="s">"</span><span class="y">{</span><span class="p">{</span>member<span class="p">}</span><span class="y">}</span><span class="s">"</span><span class="t">&gt;</span></div>
<div class="a" style="left:726px;top:424px;width:30px;height:24px;font-family:'Liberation Mono',monospace;font-size:11px;line-height:24px;color:#4e4e4e;text-align:right">22</div>
<div class="a code" style="left:796px;top:424px;height:24px;">&nbsp;&nbsp;<span class="t">&lt;button</span> type=<span class="s">"primary"</span> class=<span class="s">"weui-btn"</span> bindtap=<span class="s">"logout"</span><span class="t">&gt;</span><span style="font-size:12px">退出</span><span class="t">&lt;/</span></div>
<div class="a code" style="left:796px;top:448px;height:24px;">&nbsp;&nbsp;<span class="t">button&gt;</span></div>
<div class="a" style="left:726px;top:472px;width:30px;height:24px;font-family:'Liberation Mono',monospace;font-size:11px;line-height:24px;color:#4e4e4e;text-align:right">23</div>
<div class="a code" style="left:796px;top:472px;height:24px;"><span class="t">&lt;/view&gt;</span></div>
<div class="a" style="left:726px;top:496px;width:30px;height:24px;font-family:'Liberation Mono',monospace;font-size:11px;line-height:24px;color:#4e4e4e;text-align:right">24</div>
<div class="a code" style="left:796px;top:496px;height:24px;"></div>
<div class="a" style="left:726px;top:520px;width:30px;height:24px;font-family:'Liberation Mono',monospace;font-size:11px;line-height:24px;color:#4e4e4e;text-align:right">25</div>
<div class="a code" style="left:796px;top:520px;height:24px;"><span class="t">&lt;view</span> class=<span class="s">"weui-footer weui-footer_fixed-bottom"</span><span class="t">&gt;</span></div>
<div class="a" style="left:726px;top:544px;width:30px;height:24px;font-family:'Liberation Mono',monospace;font-size:11px;line-height:24px;color:#c6c6c6;text-align:right">26</div>
<div class="a code" style="left:796px;top:544px;height:24px;">&nbsp;&nbsp;<span class="t">&lt;view</span> class=<span class="s">"weui-footer__text"</span><span class="t">&gt;</span><span style="font-size:12px">在线免费小说阅读网</span><span class="t">&lt;/view&gt;</span></div>
<div class="a" style="left:726px;top:568px;width:30px;height:24px;font-family:'Liberation Mono',monospace;font-size:11px;line-height:24px;color:#4e4e4e;text-align:right">27</div>
<div class="a code" style="left:796px;top:568px;height:24px;"><span class="t">&lt;/view&gt;</span></div>
<div class="a" style="left:726px;top:592px;width:30px;height:24px;font-family:'Liberation Mono',monospace;font-size:11px;line-height:24px;color:#4e4e4e;text-align:right">28</div>
<div class="a code" style="left:796px;top:592px;height:24px;"></div>
<div class="a" style="left:726px;top:616px;width:30px;height:24px;font-family:'Liberation Mono',monospace;font-size:11px;line-height:24px;color:#4e4e4e;text-align:right">29</div>
<div class="a code" style="left:796px;top:616px;height:24px;"></div>
<div class="a" style="left:726px;top:640px;width:30px;height:24px;font-family:'Liberation Mono',monospace;font-size:11px;line-height:24px;color:#4e4e4e;text-align:right">30</div>
<div class="a code" style="left:783px;top:640px;height:24px;"><span class="t">&lt;/view&gt;</span></div>
<div class="a" style="left:1128px;top:545px;width:7px;height:22px;border:1px solid #8a8a8a"></div>
<div class="a" style="left:1168px;top:545px;width:7px;height:22px;border:1px solid #8a8a8a"></div>
<svg class="a" style="left:763px;top:185px;" width="12" height="8" viewBox="0 0 12 8"><path d="M1 1.5l5 5 5-5" stroke="#c0c0c0" stroke-width="1.2" fill="none"/></svg>
<svg class="a" style="left:763px;top:209px;" width="12" height="8" viewBox="0 0 12 8"><path d="M1 1.5l5 5 5-5" stroke="#c0c0c0" stroke-width="1.2" fill="none"/></svg>
<svg class="a" style="left:763px;top:401px;" width="12" height="8" viewBox="0 0 12 8"><path d="M1 1.5l5 5 5-5" stroke="#c0c0c0" stroke-width="1.2" fill="none"/></svg>
<svg class="a" style="left:763px;top:521px;" width="12" height="8" viewBox="0 0 12 8"><path d="M1 1.5l5 5 5-5" stroke="#c0c0c0" stroke-width="1.2" fill="none"/></svg>
<div class="a" style="left:796px;top:208px;width:1px;height:144px;background:#4a4a4a"></div>
<div class="a" style="left:809px;top:280px;width:1px;height:48px;background:#4a4a4a"></div>
<div class="a" style="left:796px;top:424px;width:1px;height:48px;background:#4a4a4a"></div>
<div class="a" style="left:796px;top:544px;width:1px;height:24px;background:#4a4a4a"></div>
<div class="a" style="left:802px;top:142px;width:422px;height:34px;background:#282828;box-shadow:0 2px 6px rgba(0,0,0,.5)"></div>
<div class="a" style="left:802px;top:142px;width:2px;height:34px;background:#4a4a4a"></div>
<div class="a" style="left:795px;top:143px;font-family:'Liberation Mono',monospace;font-size:11px;line-height:12px;color:#5aa9e6">&lt;</div>
<svg class="a" style="left:809px;top:151px;" width="10" height="14" viewBox="0 0 10 14"><path d="M2 1.5L8 7l-6 5.5" stroke="#c8c8c8" stroke-width="1.3" fill="none"/></svg>
<div class="a" style="left:823px;top:146px;width:227px;height:25px;background:#3c3c3c"></div>
<div class="a" style="left:826px;top:149px;font-size:13px;line-height:18px;color:#cccccc">tobuy</div>
<div class="a" style="left:987px;top:150px;font-size:12px;line-height:14px;color:#a8a8a8">Aa</div>
<div class="a" style="left:1008px;top:150px;font-size:11px;line-height:14px;color:#a8a8a8;text-decoration:underline;border-top:1px solid #a8a8a8">Ab|</div>
<div class="a" style="left:1031px;top:150px;font-size:14px;line-height:14px;color:#a8a8a8">.*</div>
<div class="a" style="left:1055px;top:151px;font-size:12px;line-height:16px;color:#f48771">无结果</div>
<svg class="a" style="left:1129px;top:151px;" width="12" height="14" viewBox="0 0 12 14"><path d="M6 13V2M1.5 6.5L6 2l4.5 4.5" stroke="#6a6a6a" stroke-width="1.2" fill="none"/></svg>
<svg class="a" style="left:1152px;top:151px;" width="12" height="14" viewBox="0 0 12 14"><path d="M6 1v11M1.5 7.5L6 12l4.5-4.5" stroke="#6a6a6a" stroke-width="1.2" fill="none"/></svg>
<svg class="a" style="left:1174px;top:152px;" width="16" height="12" viewBox="0 0 16 12"><path d="M1 2h14M1 6h10M1 10h14" stroke="#a8a8a8" stroke-width="1.1"/></svg>
<svg class="a" style="left:1201px;top:152px;" width="11" height="11" viewBox="0 0 11 11"><path d="M1 1l9 9M10 1L1 10" stroke="#d0d0d0" stroke-width="1.4"/></svg>
<div class="a" style="left:1237px;top:506px;width:12px;height:3px;background:#9a9a9a"></div>
<div class="a" style="left:1241px;top:506px;width:4px;height:11px;background:#9a9a9a"></div>
<div class="a" style="left:711px;top:205px;width:6px;height:40px;background:#353535;display:none"></div>
<div class="a" style="left:0px;top:0px;width:1px;height:150px;background:#2a2a2a"></div>
<div class="a" style="left:0px;top:718px;width:1px;height:226px;background:#2a2a2a"></div>
</div>
</body></html>
